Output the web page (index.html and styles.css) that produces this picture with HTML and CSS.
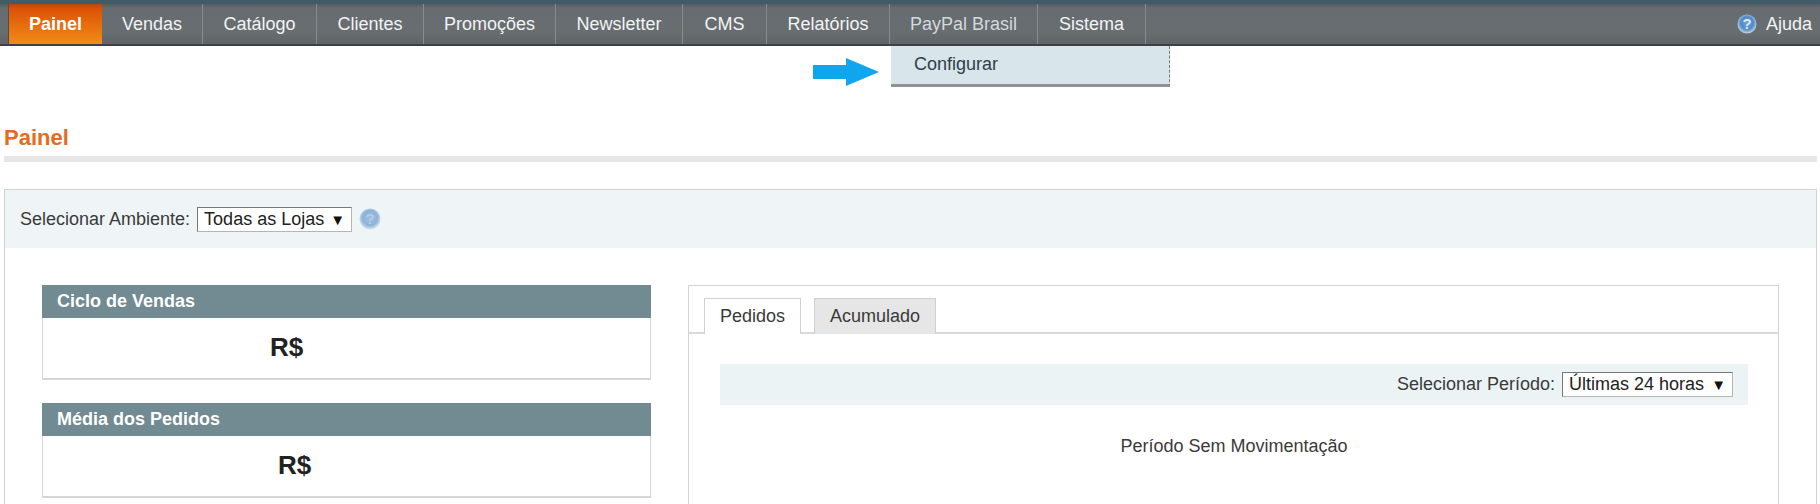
FILE: index.html
```html
<!DOCTYPE html>
<html lang="pt-BR">
<head>
<meta charset="utf-8">
<title>Painel</title>
<link rel="stylesheet" href="styles.css">
</head>
<body>
<svg width="0" height="0" class="defs">
  <defs>
    <radialGradient id="helpGrad" cx="50%" cy="45%" r="55%">
      <stop offset="0%" stop-color="#6ea3da"/>
      <stop offset="60%" stop-color="#4f8ac8"/>
      <stop offset="100%" stop-color="#c4d8ec"/>
    </radialGradient>
    <radialGradient id="helpGradDim" cx="50%" cy="45%" r="55%">
      <stop offset="0%" stop-color="#9dbfe0"/>
      <stop offset="65%" stop-color="#8fb3d8"/>
      <stop offset="100%" stop-color="#d9e5f0"/>
    </radialGradient>
  </defs>
</svg>
<header class="topbar">
  <nav class="nav">
    <a class="nav-item active">Painel</a>
    <a class="nav-item">Vendas</a>
    <a class="nav-item">Catálogo</a>
    <a class="nav-item">Clientes</a>
    <a class="nav-item">Promoções</a>
    <a class="nav-item">Newsletter</a>
    <a class="nav-item">CMS</a>
    <a class="nav-item">Relatórios</a>
    <a class="nav-item dim">PayPal Brasil</a>
    <a class="nav-item">Sistema</a>
  </nav>
  <a class="help-link">
    <svg class="help-top" width="20" height="20" viewBox="0 0 20 20"><circle cx="10" cy="10" r="9.5" fill="url(#helpGrad)"/><text x="10" y="15" text-anchor="middle" class="q">?</text></svg>
    Ajuda
  </a>
</header>
<div class="dropdown">Configurar</div>
<svg class="arrow" width="66" height="28" viewBox="0 0 66 28"><path d="M0 7H33V0L66 14L33 28V21H0Z" fill="#0fa6ee"/></svg>
<main class="page">
  <h1 class="page-title">Painel</h1>
  <section class="dash">
    <div class="scope">
      <span class="label">Selecionar Ambiente:</span>
      <span class="fake-select store">Todas as Lojas<i class="caret">▼</i></span>
      <svg class="help-scope" width="22" height="22" viewBox="0 0 22 22"><circle cx="11" cy="11" r="10.5" fill="url(#helpGradDim)"/><text x="11" y="16" text-anchor="middle" class="q faint">?</text></svg>
    </div>
    <div class="columns">
      <div class="side">
        <article class="card">
          <h2 class="card-head">Ciclo de Vendas</h2>
          <div class="card-body first">R$</div>
        </article>
        <article class="card">
          <h2 class="card-head">Média dos Pedidos</h2>
          <div class="card-body second">R$</div>
        </article>
      </div>
      <div class="chart">
        <div class="tabs">
          <span class="tab on">Pedidos</span>
          <span class="tab">Acumulado</span>
        </div>
        <div class="tab-panel">
          <div class="period">
            <span class="label">Selecionar Período:</span>
            <span class="fake-select range">Últimas 24 horas<i class="caret">▼</i></span>
          </div>
          <p class="empty">Período Sem Movimentação</p>
        </div>
      </div>
    </div>
  </section>
</main>
</body>
</html>
```
FILE: styles.css
```css
* { box-sizing: border-box; }
html, body { margin: 0; height: 504px; overflow: hidden; background: #fff; }
body { font-family: "Liberation Sans", Arial, sans-serif; color: #2f2f2f; position: relative; }
.defs { position: absolute; }

.topbar {
  height: 46px;
  display: flex;
  justify-content: space-between;
  align-items: stretch;
  padding-left: 8px;
  border-top: 4px solid #3f5c68;
  border-bottom: 2px solid #3c4145;
  background: linear-gradient(#545b60 0, #666c70 10%, #686d70 70%, #5f6468 100%);
}
.nav { display: flex; }
.nav-item {
  display: flex;
  align-items: center;
  justify-content: center;
  font-size: 18px;
  color: #f2f4f4;
  border-right: 1px solid #858b8f;
}
.nav-item:nth-child(1) { width: 94px; }
.nav-item:nth-child(2) { width: 101px; }
.nav-item:nth-child(3) { width: 114px; }
.nav-item:nth-child(4) { width: 107px; }
.nav-item:nth-child(5) { width: 132px; }
.nav-item:nth-child(6) { width: 127px; }
.nav-item:nth-child(7) { width: 84px; }
.nav-item:nth-child(8) { width: 123px; }
.nav-item:nth-child(9) { width: 148px; }
.nav-item:nth-child(10) { width: 108px; }
.nav-item.active {
  font-weight: 700;
  color: #fff;
  border-right: 0;
  border-left: 1px solid #4b4f52;
  background: linear-gradient(#b8470a 0, #dc5207 12%, #e8720f 60%, #f08c18 100%);
}
.nav-item.dim { color: #d3d9dc; }
.help-link {
  display: flex;
  align-items: center;
  gap: 9px;
  padding-right: 8px;
  font-size: 18px;
  color: #f2f4f4;
}

.dropdown {
  position: absolute;
  left: 891px;
  top: 46px;
  width: 279px;
  height: 41px;
  padding: 0 0 2px 23px;
  display: flex;
  align-items: center;
  font-size: 18px;
  color: #2f3f49;
  background: #d8e5ea;
  border-bottom: 3px solid #8f9192;
  border-right: 1px dashed #777;
}
.arrow { position: absolute; left: 813px; top: 58px; }

.page { padding: 0 3px 0 4px; }
.page-title {
  margin: 0;
  padding-top: 78px;
  height: 116px;
  font-size: 22px;
  line-height: 28px;
  font-weight: 700;
  color: #e36c20;
  border-bottom: 6px solid #e6e6e6;
}
.dash {
  margin-top: 27px;
  border: 1px solid #cfd3d4;
  border-bottom: 0;
}
.scope {
  height: 58px;
  background: #eff5f7;
  display: flex;
  align-items: center;
  padding-left: 15px;
  font-size: 18px;
}
.label { color: #3a3a3a; }
.fake-select {
  display: flex;
  align-items: center;
  justify-content: space-between;
  height: 25px;
  background: #fff;
  border: 1px solid #8b8b8b;
  border-color: #777 #b5b5b5 #b5b5b5 #777;
  color: #222;
  padding: 0 6px 0 6px;
  font-size: 18px;
}
.caret { font-style: normal; font-size: 15px; color: #111; }
.store { width: 155px; margin-left: 7px; }
.help-scope { margin-left: 7px; }
.q { font: 700 15px "Liberation Sans", Arial, sans-serif; fill: #dfeaf6; }
.q.faint { fill: #b4cce6; }

.columns {
  display: flex;
  align-items: flex-start;
  padding: 37px 38px 0 37px;
  gap: 37px;
}
.side { width: 609px; flex: none; display: flex; flex-direction: column; gap: 23px; }
.card-head {
  margin: 0;
  height: 33px;
  display: flex;
  align-items: center;
  padding-left: 15px;
  background: #728a92;
  color: #fff;
  font-size: 18px;
  font-weight: 700;
}
.card-body {
  height: 62px;
  display: flex;
  align-items: center;
  justify-content: center;
  padding-bottom: 2px;
  font-size: 26px;
  font-weight: 700;
  color: #222;
  border: 1px solid #d4d6d7;
  border-top: 0;
  border-bottom-width: 2px;
}
.card-body.first { padding-right: 120px; }
.card-body.second { padding-right: 104px; }

.chart { width: 1091px; flex: none; border: 1px solid #d2d4d5; border-bottom: 0; height: 219px; }
.tabs {
  display: flex;
  gap: 13px;
  height: 48px;
  padding: 12px 0 0 15px;
  border-bottom: 2px solid #d9dadb;
}
.tab {
  height: 36px;
  display: flex;
  align-items: center;
  justify-content: center;
  font-size: 18px;
  color: #3a3a3a;
  background: #e6e6e6;
  border: 1px solid #d0d0d0;
  border-bottom: 0;
  width: 122px;
}
.tab.on { width: 97px; background: #fff; position: relative; z-index: 1; }
.tab-panel { padding: 30px 30px 0 31px; }
.period {
  height: 41px;
  background: #ecf3f5;
  display: flex;
  align-items: center;
  justify-content: flex-end;
  padding-right: 15px;
  font-size: 18px;
}
.range { width: 171px; margin-left: 7px; }
.empty { margin: 31px 0 0; text-align: center; font-size: 18px; color: #3a3a3a; line-height: 20px; }
```
